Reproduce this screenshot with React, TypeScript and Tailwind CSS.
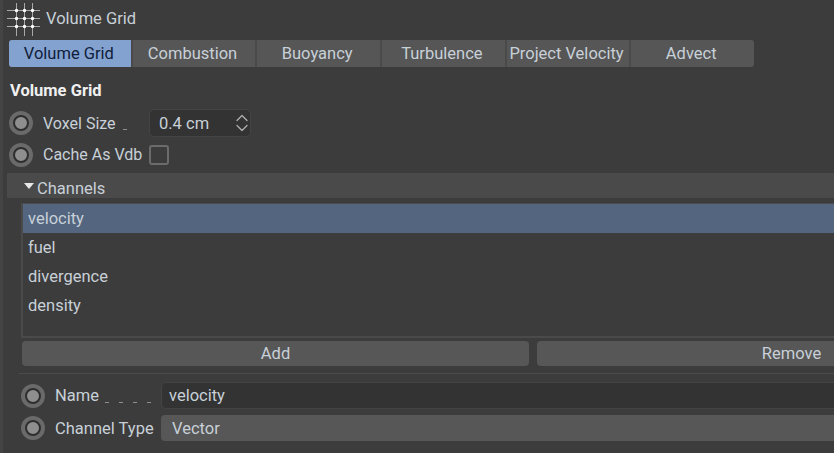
import { ChevronDown, ChevronUp } from "lucide-react";

const tabs = ["Volume Grid", "Combustion", "Buoyancy", "Turbulence", "Project Velocity", "Advect"];
const channels = ["velocity", "fuel", "divergence", "density"];

function GridIcon() {
  return (
    <svg width="34" height="34" viewBox="0 0 34 34" className="shrink-0">
      <g stroke="#a8a8a8" strokeWidth="1">
        <path d="M0 8.5H33M0 16.5H33M0 24.5H33M9.5 1V34M17.5 1V34M25.5 1V34" />
      </g>
      <g fill="#ffffff">
        {[8.5, 16.5, 24.5].map((y) =>
          [9.5, 17.5, 25.5].map((x) => <circle key={`${x}-${y}`} cx={x} cy={y} r="1.7" />)
        )}
      </g>
    </svg>
  );
}

function Dot() {
  return (
    <span className="w-[24px] h-[24px] rounded-full bg-[#6a6a6a] flex items-center justify-center shrink-0">
      <span className="w-[16px] h-[16px] rounded-full bg-[#8e8e8e] border-2 border-[#2e2e2e]" />
    </span>
  );
}

function Dash() {
  return <span className="w-[4px] h-[1px] bg-[#8f8f8f] shrink-0" />;
}

export default function App() {
  return (
    <div
      className="w-[834px] h-[453px] overflow-hidden bg-[#3c3c3c] text-[#c8d0d8] text-[16.5px] leading-[22px] border-l-[3px] border-[#444444]"
      style={{ fontFamily: "Roboto, sans-serif" }}
    >
      {/* header */}
      <div className="flex items-center h-[37px] pl-[4px] gap-[5px]">
        <GridIcon />
        <span>Volume Grid</span>
      </div>

      {/* tabs */}
      <div className="flex ml-[6px] mt-[3px] w-[745px] h-[27px] rounded-[3px] bg-[#565656] overflow-hidden">
        {tabs.map((t, i) => (
          <div
            key={t}
            className={
              i === 0
                ? "flex-1 flex items-center justify-center pt-[1px] pr-[2px] bg-[#84a2d0] text-[#10203a]"
                : "flex-1 flex items-center justify-center pt-[1px] pr-[3px] border-l-2 border-[#4a4a4a]"
            }
          >
            {t}
          </div>
        ))}
      </div>

      <div className="ml-[7px] mt-[12px] h-[22px] pt-[1px] font-bold text-[#f0f0f0]">Volume Grid</div>

      {/* voxel size */}
      <div className="flex items-center mt-[8px] ml-[6px] h-[28px]">
        <Dot />
        <span className="ml-[10px] w-[106px] flex items-center gap-[7px] text-[16px] pt-[1px]">
          Voxel Size
          <span className="mt-[12px] flex"><Dash /></span>
        </span>
        <div className="flex items-center justify-between w-[102px] h-[28px] rounded-[5px] bg-[#333333] border border-[#444444] pl-[9px]">
          <span className="pt-[1px]">0.4 cm</span>
          <span className="flex flex-col text-[#b0b0b0] -mr-[2px]">
            <ChevronUp size={20} strokeWidth={1.5} className="-my-[5px]" />
            <ChevronDown size={20} strokeWidth={1.5} className="-my-[5px]" />
          </span>
        </div>
      </div>

      {/* cache */}
      <div className="flex items-center mt-[4px] ml-[6px] h-[28px]">
        <Dot />
        <span className="ml-[10px] w-[106px] text-[16px]">Cache As Vdb</span>
        <span className="w-[20px] h-[20px] rounded-[3px] border-2 border-[#6b6b6b]" />
      </div>

      {/* channels */}
      <div className="flex items-center mt-[4px] ml-[4px] h-[25px] bg-[#4a4a4a] pl-[17px] pt-[6px] gap-[3px]">
        <span className="w-0 h-0 border-x-[5px] border-x-transparent border-t-[6px] border-t-[#e8e8e8] -mt-[5px]" />
        <span>Channels</span>
      </div>

      <div className="ml-[18px] mt-[5px] h-[135px] border-2 border-t border-[#4a4a4a] border-r-0">
        {channels.map((c, i) => (
          <div
            key={c}
            className={i === 0 ? "h-[29px] pl-[5px] flex items-center bg-[#53657f]" : "h-[29px] pl-[5px] flex items-center"}
          >
            {c}
          </div>
        ))}
      </div>

      {/* buttons */}
      <div className="flex gap-[8px] ml-[19px] mt-[3px] w-[1023px] h-[25px]">
        <div className="w-[507px] shrink-0 rounded-[4px] bg-[#575757] pt-[1px] flex items-center justify-center">Add</div>
        <div className="w-[509px] shrink-0 rounded-[4px] bg-[#575757] pt-[1px] flex items-center justify-center">Remove</div>
      </div>

      <div className="ml-[16px] mt-[7px] h-[1px] bg-[#4c4c4c]" />

      {/* name */}
      <div className="flex items-center mt-[8px] ml-[18px] h-[27px]">
        <Dot />
        <span className="ml-[10px] w-[106px] shrink-0 flex items-center pt-[1px]">
          Name
          <span className="ml-[6px] mt-[12px] flex gap-[10px]"><Dash /><Dash /><Dash /><Dash /></span>
        </span>
        <div className="flex-1 h-[27px] rounded-l-[5px] bg-[#333333] border border-r-0 border-[#444444] pl-[7px] pt-[1px] flex items-center">velocity</div>
      </div>

      {/* channel type */}
      <div className="flex items-center mt-[6px] ml-[18px] h-[26px]">
        <Dot />
        <span className="ml-[10px] w-[106px] shrink-0 pt-[1px]">Channel Type</span>
        <div className="flex-1 h-[26px] rounded-l-[4px] bg-[#575757] pl-[11px] pt-[1px] flex items-center">Vector</div>
      </div>
    </div>
  );
}
